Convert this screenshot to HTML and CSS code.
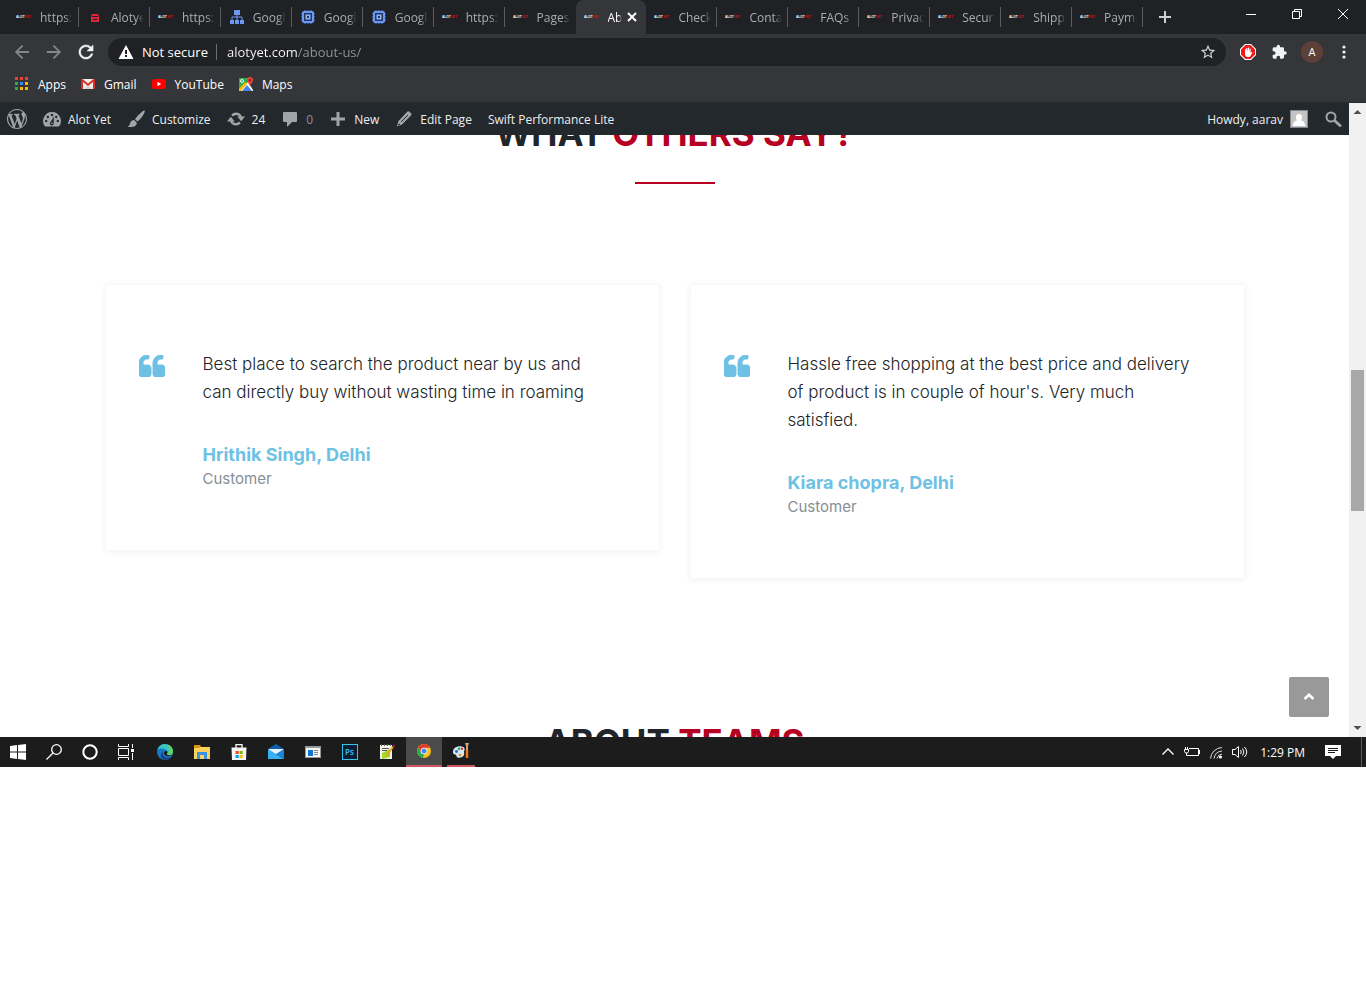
FILE: index.html
```html
<!DOCTYPE html>
<html lang="en">
<head>
  <meta charset="UTF-8">
  <title>About us</title>
  <link rel="stylesheet" href="styles.css">
</head>
<body>
  <svg class="sprite" aria-hidden="true">
    <symbol id="alot" viewBox="0 0 20 20">
      <text x="0" y="11" font-size="4" font-weight="700" font-family="Liberation Sans, sans-serif" fill="#fff">ALOT<tspan fill="#d01018">YET</tspan></text>
    </symbol>
    <symbol id="chip" viewBox="0 0 16 16">
      <path d="M5 1v14M8 1v14M11 1v14M1 5h14M1 8h14M1 11h14" stroke="#5c8df0" stroke-width="1"/>
      <rect x="3" y="3" width="10" height="10" rx="1" fill="#26365e" stroke="#6b98f5" stroke-width="2"/>
      <rect x="5.500" y="5.500" width="5" height="5" fill="#8ab4f8"/>
      <rect x="7" y="7" width="2" height="2" fill="#26365e"/>
    </symbol>
    <symbol id="quote" viewBox="0 128 1664 1408">
      <path id="mark" d="M768 960v384q0 80-56 136t-136 56H192q-80 0-136-56T0 1344V640q0-104 40.5-198.5T150 278t163.500-109.500T512 128h64q26 0 45 19t19 45v128q0 26-19 45t-45 19h-64q-106 0-181 75t-75 181v32q0 40 28 68t68 28h224q80 0 136 56t56 136z" stroke-width="60"/>
      <use href="#mark" x="896"/>
    </symbol>
  </svg>

  <div class="desktop">
    <!-- tabs -->
    <header class="tab-strip">
      <nav class="tabs">
        <a class="tab" href="#"><svg><use href="#alot"/></svg><span>https:/</span></a>
        <a class="tab" href="#"><svg viewBox="0 0 16 16"><path fill="#d7263d" d="M5 5h6l1 2v6H4V7z"/><path stroke="#202124" d="M5 7.500h6M6 10.500h4"/></svg><span>Alotye</span></a>
        <a class="tab" href="#"><svg><use href="#alot"/></svg><span>https:/</span></a>
        <a class="tab" href="#"><svg viewBox="0 0 16 16"><path fill="#6b98f5" d="M5 1h6v5H5zM1 11h4v4H1zM6 11h4v4H6zM11 11h4v4h-4z"/><path fill="none" stroke="#6b98f5" d="M8 6v5M3 11V8h10v3"/></svg><span>Googl</span></a>
        <a class="tab" href="#"><svg><use href="#chip"/></svg><span>Googl</span></a>
        <a class="tab" href="#"><svg><use href="#chip"/></svg><span>Googl</span></a>
        <a class="tab" href="#"><svg><use href="#alot"/></svg><span>https:/</span></a>
        <a class="tab last" href="#"><svg><use href="#alot"/></svg><span>Pages</span></a>
        <a class="tab active" href="#"><svg><use href="#alot"/></svg><span>Ab</span><svg class="close" viewBox="0 0 16 16"><path d="M4 4l8 8M12 4l-8 8" stroke="#fff" stroke-width="2"/></svg></a>
        <a class="tab" href="#"><svg><use href="#alot"/></svg><span>Check</span></a>
        <a class="tab" href="#"><svg><use href="#alot"/></svg><span>Conta</span></a>
        <a class="tab" href="#"><svg><use href="#alot"/></svg><span>FAQs -</span></a>
        <a class="tab" href="#"><svg><use href="#alot"/></svg><span>Privac</span></a>
        <a class="tab" href="#"><svg><use href="#alot"/></svg><span>Securi</span></a>
        <a class="tab" href="#"><svg><use href="#alot"/></svg><span>Shipp</span></a>
        <a class="tab" href="#"><svg><use href="#alot"/></svg><span>Payme</span></a>
      </nav>
      <button class="new-tab" aria-label="New tab"><svg viewBox="0 0 16 16"><path d="M8 2v12M2 8h12" stroke="#d0d1d4" stroke-width="2"/></svg></button>
      <div class="window-buttons">
        <button aria-label="Minimize"><svg viewBox="0 0 16 16"><path d="M3 8.500h10" stroke="#fff"/></svg></button>
        <button aria-label="Restore"><svg viewBox="0 0 16 16"><path fill="none" d="M3.500 5.500h7v7h-7zM5.500 5V3.500h7v7H11" stroke="#fff"/></svg></button>
        <button aria-label="Close"><svg viewBox="0 0 16 16"><path d="M3 3l10 10M13 3L3 13" stroke="#fff"/></svg></button>
      </div>
    </header>

    <!-- address bar -->
    <div class="toolbar">
      <button class="dim" aria-label="Back"><svg viewBox="3 3 18 18"><path d="M20 11H7.830l5.590-5.590L12 4l-8 8 8 8 1.410-1.410L7.830 13H20v-2z"/></svg></button>
      <button class="dim" aria-label="Forward"><svg viewBox="3 3 18 18"><path d="M4 11h12.170l-5.590-5.590L12 4l8 8-8 8-1.410-1.410L16.170 13H4v-2z"/></svg></button>
      <button aria-label="Reload"><svg viewBox="3 3 18 18"><path d="M17.650 6.350C16.200 4.900 14.210 4 12 4c-4.420 0-7.990 3.580-7.990 8s3.570 8 7.990 8c3.730 0 6.840-2.550 7.730-6h-2.080c-.82 2.330-3.040 4-5.650 4-3.310 0-6-2.690-6-6s2.690-6 6-6c1.660 0 3.140.69 4.220 1.780L13 11h7V4l-2.350 2.350z" stroke="#fff" stroke-width=".4"/></svg></button>
      <div class="omnibox">
        <svg viewBox="0 0 16 16"><path fill="#fff" d="M8 1l7.500 14H.5z"/><path stroke="#202124" stroke-width="2" d="M8 6v4M8 11v2"/></svg>
        <label for="url">Not secure</label>
        <input id="url" type="text" value="alotyet.com/about-us/">
        <button aria-label="Bookmark this page"><svg viewBox="1 1 22 22"><path fill="#d0d1d4" d="M22 9.240l-7.190-.62L12 2 9.190 8.630 2 9.240l5.460 4.730L5.820 21 12 17.270 18.180 21l-1.630-7.030L22 9.240zM12 15.400l-3.760 2.270 1-4.280-3.320-2.880 4.380-.38L12 6.100l1.710 4.040 4.380.38-3.320 2.880 1 4.280L12 15.400z"/></svg></button>
      </div>
      <button aria-label="Ad blocker"><svg viewBox="0 0 16 16"><path fill="#fff" d="M5 0h6l5 5v6l-5 5H5l-5-5V5z"/><path fill="#f01818" d="M5.500 1h5L15 5.500v5L10.500 15h-5L1 10.500v-5z"/><path fill="#fff" d="M5 5.500l1-.5v2.500l.3-3.500h1l.2 3.500L8 3.500h1l.2 4L9.700 4.500l1 .3-.2 4 1.300-1 .7.5-2 3.700-1.200 1H6.500L5 11z"/></svg></button>
      <button aria-label="Extensions"><svg viewBox="1 0 24 24"><path d="M20.500 11H19V7c0-1.100-.9-2-2-2h-4V3.500C13 2.120 11.880 1 10.500 1S8 2.120 8 3.500V5H4c-1.100 0-1.990.9-1.990 2v3.800H3.500c1.490 0 2.700 1.210 2.700 2.700s-1.210 2.700-2.700 2.700H2V20c0 1.100.9 2 2 2h3.800v-1.500c0-1.490 1.210-2.700 2.700-2.700 1.490 0 2.700 1.210 2.700 2.700V22H17c1.100 0 2-.9 2-2v-4h1.500c1.380 0 2.500-1.120 2.500-2.500S21.880 11 20.500 11z"/></svg></button>
      <button aria-label="Profile"><span class="profile">A</span></button>
      <button aria-label="Menu"><svg viewBox="0 0 16 16"><circle cx="8" cy="3" r="1.600"/><circle cx="8" cy="8" r="1.600"/><circle cx="8" cy="13" r="1.600"/></svg></button>
    </div>

    <nav class="bookmarks">
      <a href="#"><svg viewBox="0 0 14 14"><path fill="#ea4335" d="M0 0h3v3H0zM5 0h3v3H5zM10 0h3v3h-3z"/><path fill="#34a853" d="M0 5h3v3H0zM0 10h3v3H0z"/><path fill="#4285f4" d="M5 5h3v3H5z"/><path fill="#fbbc05" d="M10 5h3v3h-3zM5 10h3v3H5zM10 10h3v3h-3z"/></svg>Apps</a>
      <a href="#"><svg viewBox="0 0 14 14"><path fill="#eee" d="M0 2h14v10H0z"/><path fill="#d5d5d5" d="M3 12l4-4 4 4z"/><path fill="#d93025" d="M0 12V2h1.500L7 6.500 12.500 2H14v10h-2V5L7 9 2 5v7z"/></svg>Gmail</a>
      <a href="#"><svg viewBox="0 0 14 14"><rect y="2" width="14" height="10" rx="2.500" fill="#f00"/><path fill="#fff" d="M5.500 4.800v4.400L9.200 7z"/></svg>YouTube</a>
      <a href="#"><svg viewBox="0 0 14 14"><path fill="#34a853" d="M0 1h10v12H0z"/><path fill="#fff" d="M1 14L9 5l5 8v1z"/><path fill="#4285f4" d="M3 14l5-6 5 6z"/><path fill="#fbbc05" d="M0 12l6-7 2 2-6 7H0z"/><circle cx="3" cy="4" r="1.500" fill="none" stroke="#fff"/><path fill="#ea4335" d="M11 0a3.200 3.200 0 0 1 3 3.300C14 5.500 11.500 6.500 11 9.500 10.500 6.500 8 5.500 8 3.300A3.200 3.200 0 0 1 11 0z"/><circle cx="11" cy="3.200" r="1.100" fill="#811411"/></svg>Maps</a>
    </nav>

    <div class="viewport">
      <div class="page">
        <nav class="admin-bar">
          <a href="#" aria-label="WordPress"><svg viewBox="0 0 20 20"><path d="M20 10c0-5.510-4.490-10-10-10C4.480 0 0 4.490 0 10c0 5.520 4.480 10 10 10 5.510 0 10-4.480 10-10zM7.780 15.370L4.370 6.220c.55-.02 1.170-.08 1.170-.08.5-.06.44-1.130-.06-1.110 0 0-1.450.11-2.370.11-.18 0-.37 0-.58-.01C4.120 2.690 6.870 1.110 10 1.110c2.330 0 4.450.87 6.050 2.340-.68-.11-1.650.39-1.650 1.580 0 .74.45 1.360.9 2.100.35.61.55 1.360.55 2.460 0 1.490-1.400 5-1.400 5l-3.030-8.370c.54-.02.82-.17.82-.17.5-.05.44-1.250-.06-1.220 0 0-1.440.12-2.380.12-.87 0-2.330-.12-2.330-.12-.5-.03-.56 1.200-.06 1.220l.92.08 1.260 3.410zM17.410 10c.24-.64.74-1.870.43-4.250.7 1.290 1.050 2.710 1.050 4.250 0 3.290-1.730 6.240-4.400 7.780.97-2.590 1.940-5.200 2.920-7.780zM6.100 18.090C3.120 16.650 1.110 13.530 1.110 10c0-1.300.23-2.480.72-3.590C3.250 10.300 4.670 14.200 6.100 18.090zm4.030-6.630l2.580 6.980c-.86.29-1.760.45-2.710.45-.79 0-1.570-.11-2.290-.33.81-2.380 1.620-4.740 2.420-7.100z"/></svg></a>
          <a href="#"><svg viewBox="0 0 18 18"><path d="M9 2a9 9 0 0 1 7 14.500H2A9 9 0 0 1 9 2z"/><g fill="#23282d"><circle cx="9" cy="5" r="1.200"/><circle cx="4.800" cy="7" r="1.200"/><circle cx="13.200" cy="7" r="1.200"/><circle cx="3.200" cy="11" r="1.200"/><circle cx="14.800" cy="11" r="1.200"/><path d="M11 6.500l-.3 6.500a2 2 0 1 1-3.200-1z"/></g><circle cx="9" cy="13.300" r=".8"/></svg>Alot Yet</a>
          <a href="#"><svg viewBox="0 0 18 18"><path d="M17.500.5c.8.800-.2 2.700-1 4C15 7 12.500 10 10.500 11.500L8 9.200C9.800 6.500 12.500 3.800 14.500 2.200 15.500 1.300 17 0 17.500.5zM7.200 10l2.500 2.400c.3 1.700-1 3.600-3.200 4.300-2 .6-4.300.3-6 .3 1.500-.8 2-1.800 2.500-3.500.6-2 2-3.500 4.200-3.500z"/></svg>Customize</a>
          <a href="#"><svg viewBox="0 0 18 18"><path d="M9 2.500c2.700 0 5 1.600 5.900 4H18l-3.800 4.700-4-4.700h2.300A4 4 0 0 0 6 6.600L4.200 4.700A6.500 6.500 0 0 1 9 2.500zM9 15.500c-2.700 0-5-1.600-5.900-4H0l3.800-4.700 4 4.700H5.500a4 4 0 0 0 6.500-.1l1.800 1.900A6.500 6.500 0 0 1 9 15.500z"/></svg>24</a>
          <a href="#" class="muted"><svg viewBox="0 0 18 18"><path d="M3 2h12q1 0 1 1v8q0 1-1 1h-4l-5 5v-5H3q-1 0-1-1V3q0-1 1-1z"/></svg>0</a>
          <a href="#"><svg viewBox="0 0 18 18"><path d="M7.500 2h3v5.500H16v3h-5.500V16h-3v-5.500H2v-3h5.500z"/></svg>New</a>
          <a href="#"><svg viewBox="0 0 18 18"><path d="M12.500 1.500q1-.8 2 .2l1.500 1.500q1 1 .2 2L7 14.500l-5.200 2 1.700-5.500z"/><path d="M6 12l7-7M3 15l2-1" stroke="#23282d" fill="none"/></svg>Edit Page</a>
          <a href="#">Swift Performance Lite</a>
          <a href="#" class="account">Howdy, aarav<svg class="avatar" viewBox="0 0 18 18"><path fill="#c4c4c4" d="M0 0h18v18H0z"/><path fill="#fff" d="M9 3.500c2.200 0 3.500 1.500 3.500 3.500 0 1.500-.8 3-1.500 3.500 2.500.7 4.500 2 5 6.500H2c.5-4.500 2.500-5.800 5-6.500C6.300 10 5.500 8.500 5.500 7 5.500 5 6.800 3.500 9 3.500z"/></svg></a>
          <button aria-label="Search"><svg viewBox="0 0 18 18"><circle cx="7" cy="7" r="4.500" fill="none" stroke="#a0a5aa" stroke-width="2"/><path d="M11 11l5 4.500" stroke="#a0a5aa" stroke-width="3" stroke-linecap="round"/></svg></button>
        </nav>

        <section class="testimonials">
          <h2>WHAT <span>OTHERS SAY?</span></h2>
          <div class="cards">
            <article class="card">
              <svg class="quote"><use href="#quote"/></svg>
              <div>
                <p>Best place to search the product near by us and can directly buy without wasting time in roaming</p>
                <h4>Hrithik Singh, Delhi</h4>
                <small>Customer</small>
              </div>
            </article>
            <article class="card">
              <svg class="quote"><use href="#quote"/></svg>
              <div>
                <p>Hassle free shopping at the best price and delivery of product is in couple of hour's. Very much satisfied.</p>
                <h4>Kiara chopra, Delhi</h4>
                <small>Customer</small>
              </div>
            </article>
          </div>
        </section>
        <section class="teams">
          <h2>ABOUT <span>TEAMS</span></h2>
        </section>
        <button class="to-top" aria-label="Back to top"><svg viewBox="0 0 16 16"><path d="M3.500 10L8 5.800l4.500 4.200" fill="none" stroke="#fff" stroke-width="2.500"/></svg></button>
      </div>
      <div class="scrollbar">
        <svg viewBox="0 0 17 17"><path d="M4.500 11L8.500 7l4 4z"/></svg>
        <div class="track"><div class="thumb"></div></div>
        <svg viewBox="0 0 17 17"><path d="M4.500 6l4 4 4-4z"/></svg>
      </div>
    </div>

    <!-- taskbar -->
    <footer class="taskbar">
      <div class="system">
        <button aria-label="Start"><svg viewBox="0 0 16 16"><path fill="#fff" d="M0 2l7-1v6.500H0zM8 1l8-1v7.500H8zM0 8.500h7V15l-7-1zM8 8.500h8V16l-8-1z"/></svg></button>
        <button aria-label="Search"><svg viewBox="0 0 16 16"><g fill="none" stroke="#fff" stroke-width="1.300"><circle cx="10.500" cy="5.500" r="4.800"/><path d="M7 9L.5 15.500"/></g></svg></button>
        <button aria-label="Cortana"><svg viewBox="0 0 16 16"><circle cx="8" cy="8" r="6.700" fill="none" stroke="#fff" stroke-width="2"/></svg></button>
        <button aria-label="Task view"><svg viewBox="0 0 16 16"><path fill="none" stroke="#fff" d="M.5 0v2.500h10V0M.5 4.500h10v7H.5zM.5 16v-2.500h10V16M14.500 0v4M14.500 9v7"/><path fill="#fff" d="M13 5h3v3h-3z"/></svg></button>
      </div>
      <div class="apps">
        <button aria-label="Edge"><svg viewBox="0 0 16 16"><circle cx="8" cy="8" r="8" fill="#1479c9"/><path fill="#39c6c0" d="M.3 6A8 8 0 0 1 16 7.500c0 2.500-2 3.700-4 3.700-1.500 0-2.500-.6-2.300-1.200.5-.8 1-1.500.5-2.700C9 4.500 3 3.500.3 6z"/><path fill="#62d65a" d="M10 .3A8 8 0 0 1 16 7.500c0 2.500-2 3.700-4 3.700-1.500 0-2.300-.5-2.200-1C13 9 13.500 4 10 .3z"/><path fill="#1b3f7a" d="M5.500 9.500c0 3.500 4 5.500 8.500 3.500-2.500 3.500-7.500 3.500-9.500 1-2-3 .5-6.500 2.500-7-1 .6-1.500 1.500-1.500 2.500z"/><path fill="#1c1c1c" d="M9.700 10c.5-.8 1-1.500.5-2.700C8 6.500 7 8 7 9.500c.5 2.500 4 3.500 8 1.800l-3-.1c-1.500 0-2.500-.6-2.300-1.200z"/></svg></button>
        <button aria-label="File Explorer"><svg viewBox="0 0 16 16"><path fill="#d9960a" d="M0 1h6l1 2h9v3H0z"/><path fill="#fbd15b" d="M0 4h5l1-1h10v12H0z"/><path fill="#3a93dd" d="M3 15V8h10v7h-3v-4H6v4z"/></svg></button>
        <button aria-label="Store"><svg viewBox="0 0 16 16"><path fill="none" stroke="#fff" stroke-width="1.300" d="M5 4V.7h6V4"/><path fill="#f4f4f4" d="M.5 3.500h15L15 16H1z"/><path fill="#f25022" d="M4.500 7H7.700v3H4.500z"/><path fill="#7fba00" d="M8.500 7h3.200v3H8.500z"/><path fill="#00a4ef" d="M4.500 11H7.700v3H4.500z"/><path fill="#ffb900" d="M8.500 11h3.200v3H8.500z"/></svg></button>
        <button aria-label="Mail"><svg viewBox="0 0 16 16"><path fill="#0f5fae" d="M0 5l8-5 8 5z"/><path fill="#e8f3fc" d="M1 5h14v5H1z"/><path fill="#38b0f5" d="M0 5l16 10H0z"/><path fill="#1687dd" d="M16 5v10L8 10z"/></svg></button>
        <button aria-label="Window viewer"><svg viewBox="0 0 16 16"><path fill="#999" d="M0 2h16v12H0z"/><path fill="#f5f5f5" d="M1 4h14v9H1z"/><path fill="#0a78d4" d="M3 6h5v6H3z"/><path stroke="#888" d="M9 6.500h4M9 8.500h4M9 10.500h4"/></svg></button>
        <button aria-label="Photoshop"><svg viewBox="0 0 16 16"><rect x=".5" y=".5" width="15" height="15" fill="#0b1d33" stroke="#31c5f0"/><text x="3" y="11" font-size="8" font-weight="600" font-family="Open Sans, sans-serif" fill="#31c5f0">Ps</text></svg></button>
        <button aria-label="Notepad++"><svg viewBox="0 0 16 16"><path fill="#f2f2e8" d="M1 1h12v14H1z"/><path fill="#9bdc28" d="M3 9l8-4v8l-8 2z"/><path stroke="#555" d="M2.500 0v2M5.500 0v2M8.500 0v2M11.500 0v2M3 4.500h7M3 6.500h5"/><path stroke="#e9a11c" stroke-width="2" d="M7 12l7-9"/><path stroke="#c22" stroke-width="2" d="M14 3l1.500-2"/></svg></button>
        <button class="current" aria-label="Chrome"><svg viewBox="0 0 16 16"><circle cx="8" cy="8" r="7" fill="#fbc116"/><path fill="#e33b2e" d="M1.900 4.500A7 7 0 0 1 14.100 4.500L8 5 5.500 9.500z"/><path fill="#2da94f" d="M1.900 4.500L5.400 9.500 8 11l-1 4A7 7 0 0 1 1.900 4.500z"/><circle cx="8" cy="8" r="3.300" fill="#fff"/><circle cx="8" cy="8" r="2.500" fill="#4285f4"/></svg></button>
        <button class="open" aria-label="Paint"><svg viewBox="0 0 16 16"><path fill="#cfe8f6" d="M0 9c0-5 6-7 10.500-5 2 1.500 1 3 .5 4.500-.3 1 .7 2 0 3.500-1 2.500-4 3-6.500 2.500-1.500-.5-.5-2-1.700-2.700C1.500 11.200 0 11.500 0 9z"/><circle cx="3.500" cy="8.500" r="1.400" fill="#3a5fcd"/><circle cx="6" cy="5.800" r="1.300" fill="#2f9e44"/><circle cx="9" cy="5.800" r="1.200" fill="#e03131"/><circle cx="7" cy="12" r="1.300" fill="#f08c00"/><path stroke="#e8761c" stroke-width="2.500" d="M14 7v8"/><path fill="#c9a27a" d="M12 0h4l-1 3v4h-2V3z"/></svg></button>
      </div>
      <div class="tray">
        <button aria-label="Show hidden icons"><svg viewBox="0 0 16 16"><path fill="none" stroke="#fff" stroke-width="1.300" d="M2.500 10.500L8 5l5.500 5.500"/></svg></button>
        <button aria-label="Battery"><svg viewBox="0 0 16 16"><path fill="none" stroke="#fff" d="M5 4.500h9.500v7H5M15.500 6v4M.5 5.500h4v2q0 1.500-2 1.500T.5 7.500zM1.500 5V3M3.500 5V3M2.500 9v2.500H6"/></svg></button>
        <button aria-label="Wi-Fi"><svg viewBox="0 0 16 16"><g fill="none" stroke="#ddd"><path d="M2.500 14.500A12 12 0 0 1 14 3.500M6 14.500A9 9 0 0 1 14 7M9 14.500A6 6 0 0 1 14 10"/></g><circle cx="12.500" cy="13" r="1.600" fill="#fff"/></svg></button>
        <button aria-label="Volume"><svg viewBox="0 0 16 16"><path fill="none" stroke="#fff" d="M.5 5.500H3L6.500 2.500v11L3 10.500H.500zM8.500 6q1.500 2 0 4M10.500 4.500q2.800 3.500 0 7M12.500 3q4.500 5 0 10"/></svg></button>
        <time>1:29 PM</time>
        <button class="notice" aria-label="Notifications"><svg viewBox="0 0 16 16"><path fill="#fff" d="M0 1h16v11h-5l-3 3-3-3H0z"/><path stroke="#1c1c1c" d="M3 4.500h10M3 6.500h10M3 8.500h7"/></svg></button>
      </div>
    </footer>
  </div>
</body>
</html>
```
FILE: styles.css
```css
* {
  box-sizing: border-box;
}
body {
  margin: 0;
  background-color: #fff;
  font-family: "Open Sans", "Noto Sans", sans-serif;
  font-size: 12px;
}
a {
  color: inherit;
  text-decoration: none;
}
button {
  display: flex;
  align-items: center;
  justify-content: center;
  padding: 0;
  border: none;
  background: none;
  color: inherit;
  font: inherit;
}
svg {
  flex: none;
  width: 16px;
  height: 16px;
}
.sprite {
  display: none;
}
.desktop {
  display: flex;
  flex-direction: column;
}

/* tabs */
.tab-strip {
  display: flex;
  height: 34px;
  padding-left: 8px;
  background-color: #202124;
  color: #a9adb2;
}
.tabs {
  display: flex;
  flex: 1;
  min-width: 0;
}
.tab {
  display: flex;
  flex: 1;
  align-items: center;
  gap: 8px;
  min-width: 0;
  padding-left: 8px;
  background: linear-gradient(#5a5b5e, #5a5b5e) right center / 1px 20px no-repeat;
}
.tab span {
  flex: 1;
  overflow: hidden;
  margin-right: 6px;
  white-space: nowrap;
  -webkit-mask-image: linear-gradient(to right, #000 75%, transparent);
  mask-image: linear-gradient(to right, #000 75%, transparent);
}
.tab.last {
  background: none;
}
.tab.active {
  border-radius: 8px 8px 0 0;
  background: #35363a;
  color: #fff;
}
.tab.active span {
  margin-right: -6px;
}
.tab.active .close {
  margin-right: 6px;
}
.new-tab {
  width: 44px;
}
.window-buttons {
  display: flex;
  height: 28px;
  margin-left: 41px;
}
.window-buttons button {
  width: 46px;
}

/* address bar */
.toolbar {
  display: flex;
  align-items: center;
  height: 36px;
  padding: 0 6px;
  background-color: #35363a;
  color: #fff;
}
.toolbar > button {
  width: 32px;
  height: 32px;
}
.toolbar svg {
  fill: #f1f3f4;
}
.toolbar .dim svg {
  fill: #85868a;
}
.omnibox {
  display: flex;
  flex: 1;
  align-items: center;
  gap: 8px;
  height: 28px;
  margin: 0 6px;
  padding: 0 10px;
  border-radius: 14px;
  background-color: #202124;
  font-size: 13px;
}
.omnibox label {
  padding-right: 8px;
  border-right: 1px solid #6d6e71;
  line-height: 16px;
}
.omnibox input {
  flex: 1;
  min-width: 0;
  padding: 0 0 0 2px;
  border: none;
  outline: none;
  background: linear-gradient(to right, #fff 73px, #94969a 73px);
  -webkit-background-clip: text;
  background-clip: text;
  color: transparent;
  font: inherit;
}
.profile {
  width: 22px;
  border-radius: 50%;
  background-color: #5d4037;
  font-size: 11px;
  line-height: 22px;
}
.bookmarks {
  display: flex;
  gap: 15px;
  height: 32px;
  padding: 0 15px 4px;
  background-color: #35363a;
  color: #fff;
}
.bookmarks a {
  display: flex;
  align-items: center;
  gap: 9px;
}
.bookmarks svg {
  width: 14px;
  height: 14px;
}

/* web page */
.viewport {
  display: flex;
  border-top: 1px solid #28292c;
}
.page {
  position: relative;
  flex: 1;
  min-width: 0;
  overflow: hidden;
}
.admin-bar {
  position: relative;
  z-index: 1;
  display: flex;
  gap: 16px;
  height: 32px;
  padding: 0 7px;
  background-color: #23282d;
  color: #eee;
}
.admin-bar a {
  display: flex;
  align-items: center;
  gap: 7px;
}
.admin-bar svg {
  width: 18px;
  height: 18px;
  fill: #a0a5aa;
}
.admin-bar a:first-child svg {
  width: 20px;
  height: 20px;
}
.admin-bar .muted {
  color: #8b8f94;
}
.admin-bar .account {
  margin-left: auto;
}
.admin-bar .avatar {
  border: 1px solid #82878c;
}
.testimonials,
.teams {
  font-family: Inter, "Open Sans", sans-serif;
}
h2 {
  margin: 0;
  color: #212529;
  font-size: 35px;
  font-weight: 700;
  line-height: 44px;
  text-align: center;
}
h2 span {
  color: #b50021;
}
.testimonials h2 {
  margin-top: -24px;
}
.testimonials h2::after {
  content: "";
  display: block;
  width: 80px;
  height: 2px;
  margin: 27px auto 0;
  background-color: #b50021;
}
.cards {
  display: flex;
  align-items: flex-start;
  gap: 30px;
  max-width: 1140px;
  margin: 100px auto 0;
}
.card {
  display: flex;
  flex: 1;
  gap: 38px;
  padding: 65px 48px 60px 33px;
  border: 1px solid #f8f8f8;
  box-shadow: 0 1px 7px rgba(0, 0, 0, 0.06);
}
.card .quote {
  width: 26px;
  height: 22px;
  margin-top: 5px;
  fill: #6ec1e4;
  stroke: #6ec1e4;
}
.card p {
  margin: 0 0 36px;
  color: #212529;
  font-size: 17px;
  font-weight: 300;
  line-height: 28px;
}
.card h4 {
  margin: 0;
  color: #6ec1e4;
  font-size: 18px;
  font-weight: 700;
  line-height: 26px;
}
.card small {
  display: block;
  color: #868e96;
  font-size: 15px;
  line-height: 22px;
}
/* only the top of this heading shows above the fold */
.teams {
  height: 16px;
  margin-top: 142px;
}
.teams h2 {
  line-height: 42px;
}
.to-top {
  position: absolute;
  right: 20px;
  bottom: 20px;
  width: 40px;
  height: 40px;
  border-radius: 2px;
  background-color: #999;
}
.scrollbar {
  display: flex;
  flex-direction: column;
  width: 17px;
  background-color: #f1f1f1;
}
.scrollbar svg {
  width: 17px;
  height: 17px;
  fill: #505050;
}
.track {
  display: grid;
  flex: 1;
  grid-template-rows: 250fr 142fr 209fr;
}
.thumb {
  grid-row: 2;
  margin: 0 2px;
  background-color: #a8a8a8;
}

/* taskbar */
.taskbar {
  display: flex;
  height: 30px;
  background-color: #1c1c1c;
  color: #fff;
}
.system,
.apps,
.tray {
  display: flex;
}
.system button {
  width: 36px;
}
.apps {
  gap: 1px;
  margin-left: 3px;
}
.apps button {
  width: 36px;
}
.apps .current {
  border-bottom: 2px solid #c9595f;
  background-color: #4b4b4b;
}
.apps .open {
  width: 28px;
  margin-left: 4px;
  border-bottom: 2px solid #c9595f;
}
.tray {
  align-items: center;
  margin-left: auto;
  padding-right: 4px;
}
.tray button {
  width: 24px;
}
.tray time {
  margin: 0 16px 0 8px;
}
.tray .notice {
  width: 41px;
  height: 30px;
  padding-right: 16px;
  border-right: 1px solid #5a5a5a;
}
```
